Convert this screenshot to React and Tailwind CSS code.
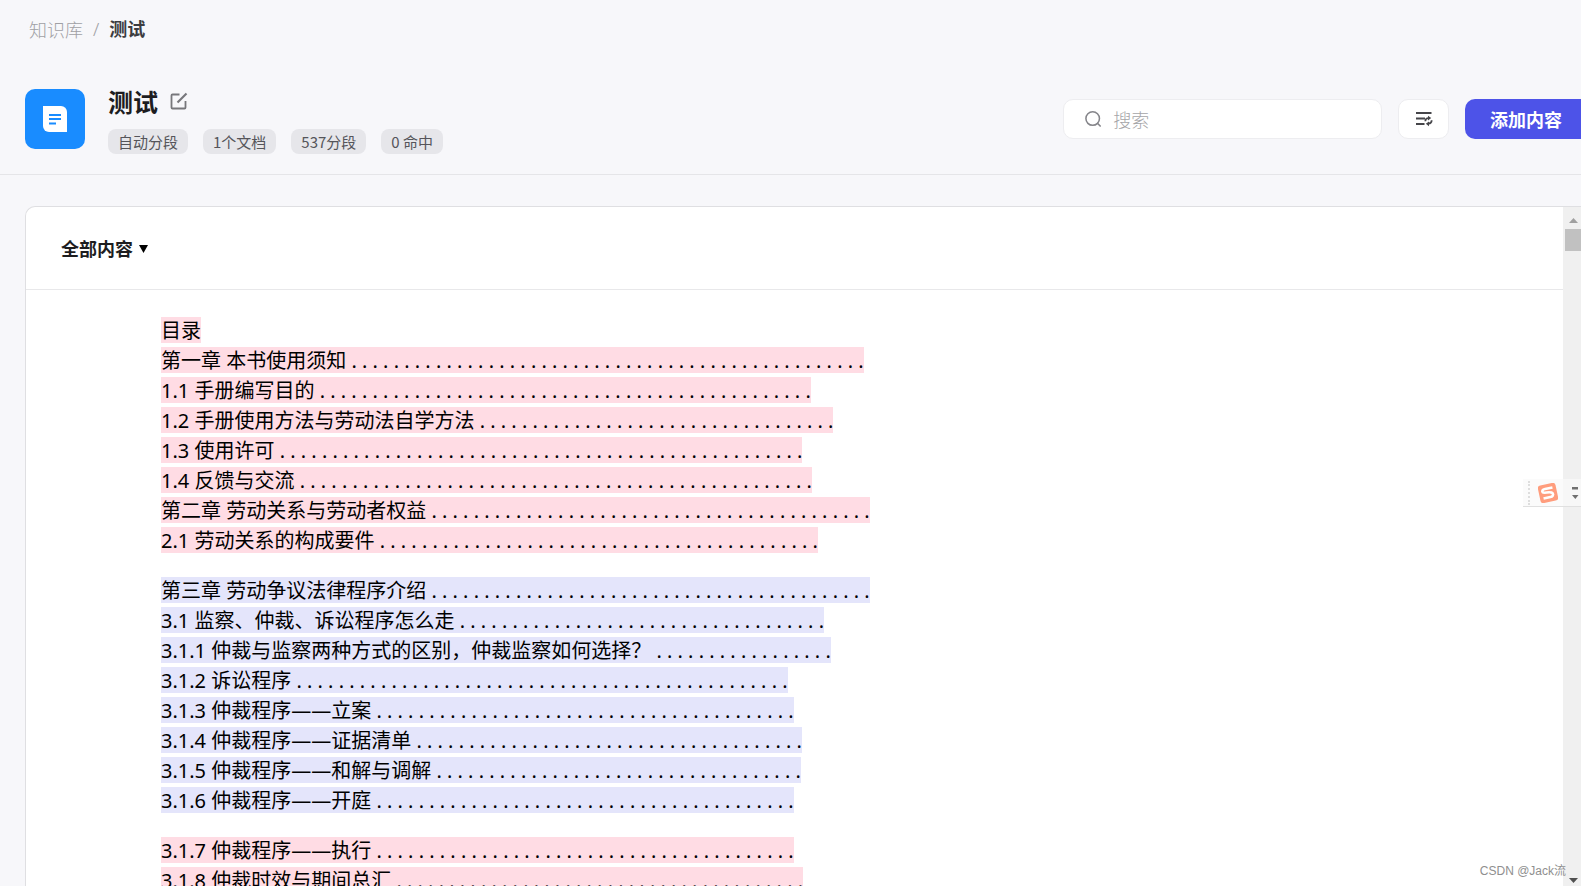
import React, { useState } from "react";

const groups = [
  {
    tone: "pink",
    lines: [
      ["目录", 0],
      ["第一章 本书使用须知", 49],
      ["1.1 手册编写目的", 47],
      ["1.2 手册使用方法与劳动法自学方法", 34],
      ["1.3 使用许可", 50],
      ["1.4 反馈与交流", 49],
      ["第二章 劳动关系与劳动者权益", 42],
      ["2.1 劳动关系的构成要件", 42],
    ],
  },
  {
    tone: "violet",
    lines: [
      ["第三章 劳动争议法律程序介绍", 42],
      ["3.1 监察、仲裁、诉讼程序怎么走", 35],
      ["3.1.1 仲裁与监察两种方式的区别，仲裁监察如何选择？", 17],
      ["3.1.2 诉讼程序", 47],
      ["3.1.3 仲裁程序——立案", 40],
      ["3.1.4 仲裁程序——证据清单", 37],
      ["3.1.5 仲裁程序——和解与调解", 35],
      ["3.1.6 仲裁程序——开庭", 40],
    ],
  },
  {
    tone: "pink",
    lines: [
      ["3.1.7 仲裁程序——执行", 40],
      ["3.1.8 仲裁时效与期间总汇", 39],
    ],
  },
];

const tags = ["自动分段", "1个文档", "537分段", "0 命中"];

function DocIcon() {
  return (
    <div className="flex size-[60px] shrink-0 items-center justify-center rounded-[10px] bg-[#198cff]">
      <svg width="24" height="26" viewBox="0 0 24 26" aria-hidden="true">
        <path d="M0 0h18a6 6 0 0 1 6 6v20H6a6 6 0 0 1-6-6z" fill="#fff" />
        <path d="M6 9h12M6 13h12M6 17.5h7" stroke="#198cff" strokeWidth="1.8" />
      </svg>
    </div>
  );
}

function EditIcon() {
  return (
    <svg width="18" height="18" viewBox="0 0 18 18" fill="none" stroke="#77777b" aria-hidden="true">
      <path d="M9.5 2.5h-7a1 1 0 0 0-1 1v12a1 1 0 0 0 1 1h12a1 1 0 0 0 1-1V9" strokeWidth="1.8" />
      <path d="M7.5 10.5 16.5 1.5" strokeWidth="2.2" />
    </svg>
  );
}

function SearchIcon() {
  return (
    <svg width="18" height="18" viewBox="0 0 18 18" fill="none" stroke="#85858a" strokeWidth="1.7" aria-hidden="true">
      <circle cx="8.5" cy="8.5" r="7.5" />
      <path d="m13.5 13.5 3.8 3.8" />
    </svg>
  );
}

function QueueIcon() {
  return (
    <svg width="18" height="16" viewBox="0 0 18 16" fill="none" stroke="#454549" aria-hidden="true">
      <path d="M1 2h15.5M1 7.5h9M1 13h8.5" strokeWidth="2" />
      <path d="M10.3 10.2c0-2.2 1.200-3 3.200-3M16.700 9.300c0 2.200-1.200 3.300-3.200 3.300" strokeWidth="1.700" />
      <path d="M13 4.800v4.600l3.200-2.400zM14 10.400v4.800l-3.200-2.400z" fill="#454549" stroke="none" />
    </svg>
  );
}

function Scrollbar() {
  return (
    <div className="flex w-[18px] shrink-0 flex-col bg-[#f0f0f0] pl-0.5">
      <div className="flex h-[22px] items-center justify-center pt-1">
        <svg width="9" height="5" viewBox="0 0 9 5" aria-hidden="true">
          <path d="M4.500 0 9 5H0z" fill="#a0a0a0" />
        </svg>
      </div>
      <div className="h-[22px] bg-[#c1c1c1]" />
      <div className="mt-auto flex h-2 items-start justify-center">
        <svg width="9" height="5" viewBox="0 0 9 5" aria-hidden="true">
          <path d="M0 0h9L4.500 5z" fill="#505050" />
        </svg>
      </div>
    </div>
  );
}

// floating input method toolbar docked at the window edge
function ImeBar() {
  return (
    <div className="absolute right-0 top-[479px] flex h-7 w-[58px] items-center border-b border-[#e0e0e0] bg-[#fafafa]/70 pr-0.5">
      <div className="ml-[5px] h-6 border-l-2 border-dotted border-[#dedede]" />
      <svg className="ml-2" width="20" height="20" viewBox="0 0 20 20" aria-hidden="true">
        <g transform="rotate(-12 10 10)">
          <rect x="1" y="1" width="18" height="18" rx="3" fill="#ff9d7d" />
          <path
            d="M15.500 5.500H8C5 5.500 4.300 7 5 8.200c.800 1.400 8.500.600 9.500 3 .800 2-1 3.300-3 3.300H4.500"
            fill="none"
            stroke="#fff"
            strokeWidth="2.600"
          />
        </g>
      </svg>
      <svg className="ml-auto" width="8" height="14" viewBox="0 0 8 14" aria-hidden="true">
        <path d="M1 1h6v2.500H1zM1 9h6.500l-3.200 4z" fill="#707070" />
      </svg>
    </div>
  );
}

export default function App() {
  const [search, setSearch] = useState("");

  return (
    <div className="relative flex h-screen flex-col overflow-hidden bg-[#f7f7fa] font-['Noto_Sans','Noto_Sans_CJK_SC',sans-serif] text-[#1d1d1f]">
      <nav className="flex h-[58px] shrink-0 items-center gap-[10px] pl-[29px] text-lg leading-6">
        <a href="#" className="font-['Noto_Sans_CJK_SC',sans-serif] font-light text-[#a0a0a4]">
          知识库
        </a>
        <span className="font-light text-[#a0a0a4]">/</span>
        <span className="font-bold text-[#3c3c40]">测试</span>
      </nav>

      <header className="flex h-[117px] shrink-0 items-start border-b border-[#e5e5e8] pl-[25px] pt-[31px]">
        <DocIcon />
        <div className="ml-[23px]">
          <div className="flex h-7 items-center gap-3">
            <h1 className="text-[25px] font-bold">测试</h1>
            <button aria-label="编辑" className="-mt-1">
              <EditIcon />
            </button>
          </div>
          <ul className="mt-3 flex gap-[15px] font-['Noto_Sans_CJK_SC',sans-serif]">
            {tags.map((t) => (
              <li key={t} className="h-[25px] rounded-lg bg-[#e6e6ea] px-[10px] text-[15px] leading-[26px] text-[#55555a]">
                {t}
              </li>
            ))}
          </ul>
        </div>

        <div className="ml-auto flex shrink-0 gap-4 pt-[10px]">
          <label className="flex h-10 w-[319px] items-center rounded-[10px] border border-[#ededf0] bg-white pl-[21px]">
            <SearchIcon />
            <input
              aria-label="搜索"
              placeholder="搜索"
              value={search}
              onChange={(e) => setSearch(e.target.value)}
              className="ml-3 w-full bg-transparent pt-0.5 text-lg font-light outline-none placeholder:text-[#a5a5a8]"
            />
          </label>
          <button
            aria-label="排序"
            className="flex h-10 w-[51px] items-center justify-center rounded-[10px] border border-[#ededf0] bg-white"
          >
            <QueueIcon />
          </button>
          <button className="h-10 rounded-l-[10px] bg-[#4d53e8] pl-[25px] pr-[19px] pt-0.5 text-lg font-bold text-white">
            添加内容
          </button>
        </div>
      </header>

      <main className="ml-[25px] mt-[31px] flex min-h-0 flex-1 overflow-hidden rounded-tl-[10px] border-l border-t border-[#dfdfe2] bg-white">
        <div className="min-w-0 flex-1 overflow-hidden">
          <div className="flex h-[83px] items-center border-b border-[#e8e8ea] pl-[35px] pt-0.5">
            <button className="flex items-center gap-1.5 text-lg font-bold">
              全部内容
              <svg width="9" height="8" viewBox="0 0 9 8" aria-hidden="true">
                <path d="M0 0h9L4.500 8z" fill="#000" />
              </svg>
            </button>
          </div>

          <div className="flex flex-col gap-5 pl-[135px] pt-[25px] text-xl leading-7 text-black">
            {groups.map((g, i) => (
              <section key={i}>
                {g.lines.map(([text, dots]) => (
                  <div key={text} className="h-[30px] whitespace-nowrap py-0.5">
                    <p className={`h-[26px] w-fit ${g.tone === "pink" ? "bg-[#ffdce4]" : "bg-[#e4e5fb]"}`}>
                      {text + " .".repeat(dots)}
                    </p>
                  </div>
                ))}
              </section>
            ))}
          </div>
        </div>
        <Scrollbar />
      </main>

      <ImeBar />
      <p className="absolute bottom-[5px] right-[15px] font-['Liberation_Sans','Noto_Sans_CJK_SC',sans-serif] text-xs leading-5 text-[#8f8f8f]">
        CSDN @Jack流
      </p>
    </div>
  );
}
